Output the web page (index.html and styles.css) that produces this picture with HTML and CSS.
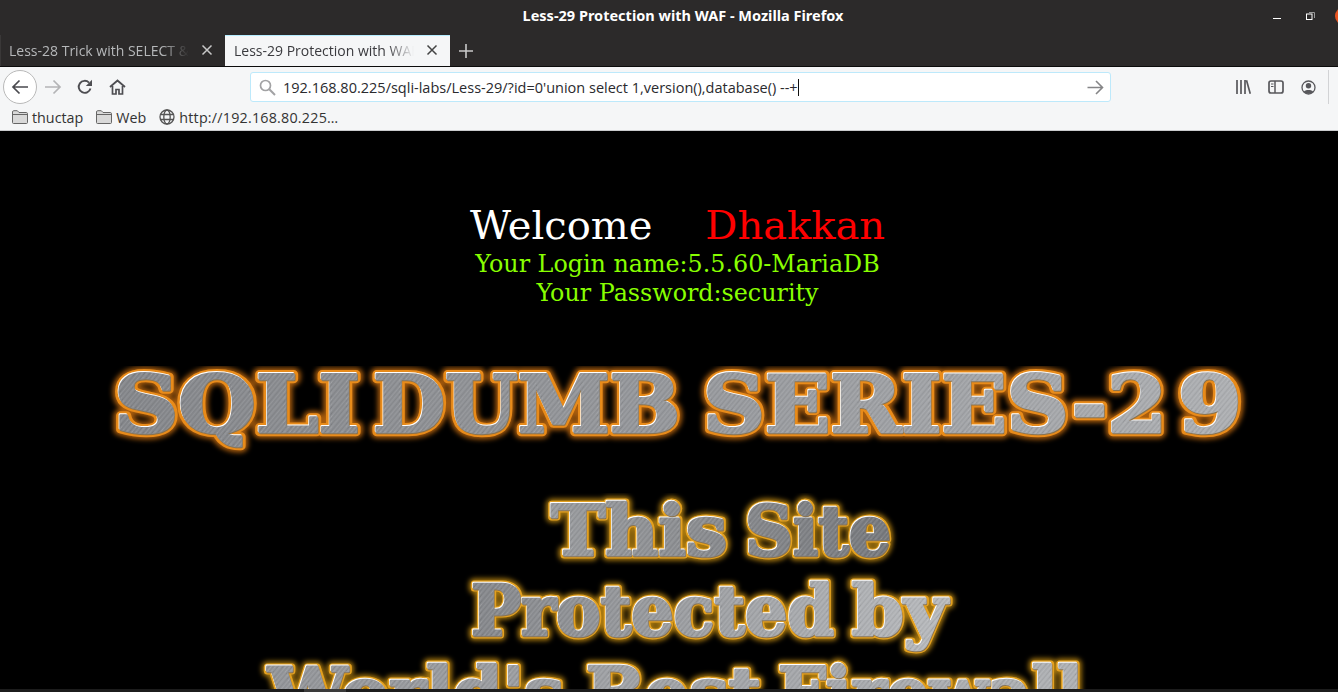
FILE: index.html
```html
<!DOCTYPE html>
<html lang="en">
<head>
<meta charset="utf-8">
<title>Less-29 Protection with WAF</title>
<link rel="stylesheet" href="styles.css">
</head>
<body>
<svg class="defs" aria-hidden="true">
  <defs>
    <pattern id="hatch" width="11" height="11" patternUnits="userSpaceOnUse" patternTransform="rotate(-50)">
      <rect width="11" height=".7" fill="#ffffff" fill-opacity=".13"/>
      <rect y="1.600" width="11" height=".6" fill="#000000" fill-opacity=".08"/>
      <rect y="3" width="11" height="1.100" fill="#ffffff" fill-opacity=".07"/>
      <rect y="5.100" width="11" height=".6" fill="#000000" fill-opacity=".10"/>
      <rect y="6.700" width="11" height=".8" fill="#ffffff" fill-opacity=".12"/>
      <rect y="9" width="11" height=".8" fill="#000000" fill-opacity=".07"/>
    </pattern>
    <linearGradient id="steel-a" gradientUnits="userSpaceOnUse" x1="110" y1="0" x2="1245" y2="0">
      <stop offset="0" stop-color="#85878b"/><stop offset=".5" stop-color="#96989c"/><stop offset="1" stop-color="#aeb0b3"/>
    </linearGradient>
    <linearGradient id="steel-b" gradientUnits="userSpaceOnUse" x1="548" y1="0" x2="893" y2="0">
      <stop offset="0" stop-color="#9a9c9f"/><stop offset="1" stop-color="#77797d"/>
    </linearGradient>
    <linearGradient id="steel-c" gradientUnits="userSpaceOnUse" x1="468" y1="0" x2="948" y2="0">
      <stop offset="0" stop-color="#85878b"/><stop offset="1" stop-color="#b8babd"/>
    </linearGradient>
    <linearGradient id="steel-d" gradientUnits="userSpaceOnUse" x1="266" y1="0" x2="1085" y2="0">
      <stop offset="0" stop-color="#939599"/><stop offset="1" stop-color="#afb1b4"/>
    </linearGradient>
    <g id="t-series" class="slab slab-a">
      <text x="114" y="66" textLength="246" lengthAdjust="spacingAndGlyphs">SQLI</text>
      <text x="373" y="66" textLength="307" lengthAdjust="spacingAndGlyphs">DUMB</text>
      <text x="703" y="66" textLength="464" lengthAdjust="spacingAndGlyphs">SERIES-2</text>
      <text x="1178" y="66" textLength="64" lengthAdjust="spacingAndGlyphs">9</text>
    </g>
    <g id="t-site" class="slab slab-b">
      <text x="551" y="62" textLength="176" lengthAdjust="spacingAndGlyphs">This</text>
      <text x="745" y="62" textLength="146" lengthAdjust="spacingAndGlyphs">Site</text>
    </g>
    <g id="t-prot" class="slab slab-b">
      <text x="471" y="142" textLength="363" lengthAdjust="spacingAndGlyphs">Protected</text>
      <text x="852" y="142" textLength="95" lengthAdjust="spacingAndGlyphs">by</text>
    </g>
    <g id="t-fire" class="slab slab-b">
      <text x="268" y="224" textLength="296" lengthAdjust="spacingAndGlyphs">World's</text>
      <text x="586" y="224" textLength="175" lengthAdjust="spacingAndGlyphs">Best</text>
      <text x="778" y="224" textLength="305" lengthAdjust="spacingAndGlyphs">Firewall</text>
    </g>
    <g id="t-waf"><use href="#t-site"/><use href="#t-prot"/><use href="#t-fire"/></g>
  </defs>
</svg>
<div class="window">
  <header class="titlebar">
    <div class="title">Less-29 Protection with WAF - Mozilla Firefox</div>
    <div class="winctl">
      <svg class="ico-min" width="10" height="3" viewBox="0 0 10 3"><rect y="1" width="8" height="1" fill="#fff"/></svg>
      <svg class="ico-max" width="10" height="10" viewBox="0 0 10 10"><path d="M3 1.500h5.500V7" fill="none" stroke="#9a9a9a"/><rect x=".5" y="3" width="5.500" height="5.500" fill="none" stroke="#fff"/></svg>
      <span class="ico-close"></span>
    </div>
  </header>
  <nav class="tabstrip">
    <div class="tab">
      <span class="tab-label">Less-28 Trick with SELECT &amp; UNION</span>
      <svg class="tab-x" width="12" height="12" viewBox="0 0 12 12"><path d="M1.500 1.500l9 9M10.500 1.500l-9 9" stroke="#c8c8c8" stroke-width="1.500"/></svg>
    </div>
    <div class="tab tab-active">
      <span class="tab-label">Less-29 Protection with WAF</span>
      <svg class="tab-x" width="12" height="12" viewBox="0 0 12 12"><path d="M1.500 1.500l9 9M10.500 1.500l-9 9" stroke="#444" stroke-width="1.500"/></svg>
    </div>
    <svg class="newtab" width="14" height="14" viewBox="0 0 14 14"><path d="M7 0v14M0 7h14" stroke="#c9c9c9" stroke-width="1.600"/></svg>
  </nav>
  <div class="toolbar">
    <div class="navbtns">
      <span class="backbtn">
        <svg width="18" height="16" viewBox="0 0 18 16"><path d="M17 8H2M8.500 1.500L2 8l6.500 6.500" fill="none" stroke="#4a4a4f" stroke-width="1.700"/></svg>
      </span>
      <svg class="fwd" width="18" height="16" viewBox="0 0 18 16"><path d="M1 8h15M9.500 1.500L16 8l-6.500 6.500" fill="none" stroke="#b4b4b6" stroke-width="1.700"/></svg>
      <svg class="reload" width="16" height="16" viewBox="0 0 16 16"><path d="M13.500 9.500A6 6 0 1 1 12 3.600" fill="none" stroke="#4e4e52" stroke-width="1.900"/><path d="M15 .8v6.200H8.800z" fill="#4e4e52"/></svg>
      <svg class="home" width="17" height="16" viewBox="0 0 17 16"><path d="M1 8l7.500-6.500L16 8" fill="none" stroke="#4e4e52" stroke-width="1.800"/><path d="M3.500 7v8h3.500v-4.500h3V15h3.500V7" fill="none" stroke="#4e4e52" stroke-width="1.700"/></svg>
    </div>
    <div class="urlbar">
      <svg class="search" width="17" height="17" viewBox="0 0 17 17"><circle cx="6.500" cy="6.500" r="5" fill="none" stroke="#a2a2a4" stroke-width="1.700"/><path d="M10.300 10.300l5.700 5.700" stroke="#a2a2a4" stroke-width="2"/></svg>
      <span class="url">192.168.80.225/sqli-labs/Less-29/?id=0'union select 1,version(),database() --+</span><span class="caret"></span>
      <svg class="go" width="17" height="15" viewBox="0 0 17 15"><path d="M.5 7.500h15M9 1l6.500 6.500L9 14" fill="none" stroke="#858587" stroke-width="1.600"/></svg>
    </div>
    <div class="tools">
      <svg width="15" height="14" viewBox="0 0 15 14"><path d="M1 0v14M5 0v14M9 0v14M10.500 .3l3.800 13.500" fill="none" stroke="#58585c" stroke-width="1.700"/></svg>
      <svg width="16" height="14" viewBox="0 0 16 14"><rect x="1" y="1" width="14" height="12" rx="2" fill="none" stroke="#58585c" stroke-width="1.700"/><path d="M7 1v12" stroke="#58585c" stroke-width="1.500"/><path d="M3 4h2.500M3 6.500h2.500" stroke="#58585c" stroke-width="1.200"/></svg>
      <svg width="15" height="15" viewBox="0 0 15 15"><circle cx="7.500" cy="7.500" r="6.500" fill="none" stroke="#58585c" stroke-width="1.300"/><circle cx="7.500" cy="5.800" r="2.700" fill="#58585c"/><path d="M2.800 12c1-2.600 8.400-2.600 9.400 0-2.500 2.300-7 2.300-9.400 0z" fill="#58585c"/></svg>
      <span class="tool-sep"></span>
    </div>
  </div>
  <div class="bookmarks">
    <a class="bm">
      <svg width="16" height="14" viewBox="0 0 16 14"><path d="M.5 12.500V2c0-.8.500-1.300 1.200-1.300h3.600L7 2.500h7.300c.7 0 1.200.5 1.200 1.200v8.800c0 .6-.4 1-1 1H1.500c-.6 0-1-.4-1-1z" fill="#d9d9d9" stroke="#666"/><path d="M.8 4.500h14.500" stroke="#666"/></svg>
      thuctap</a>
    <a class="bm">
      <svg width="16" height="14" viewBox="0 0 16 14"><path d="M.5 12.500V2c0-.8.500-1.300 1.200-1.300h3.600L7 2.500h7.300c.7 0 1.200.5 1.200 1.200v8.800c0 .6-.4 1-1 1H1.500c-.6 0-1-.4-1-1z" fill="#d9d9d9" stroke="#666"/><path d="M.8 4.500h14.500" stroke="#666"/></svg>
      Web</a>
    <a class="bm bm-url">
      <svg width="16" height="16" viewBox="0 0 16 16"><g fill="none" stroke="#555" stroke-width="1.300"><circle cx="8" cy="8" r="7"/><ellipse cx="8" cy="8" rx="3.200" ry="7"/><path d="M1.500 5.500h13M1.500 10.500h13"/></g></svg>
      http://192.168.80.225…</a>
  </div>
  <main class="page">
    <div class="welcome">
      <div class="hello"><span class="hello-w">Welcome</span><span class="hello-gap"></span><span class="hello-d">Dhakkan</span></div>
      <div class="creds">Your Login name:5.5.60-MariaDB</div>
      <div class="creds">Your Password:security</div>
    </div>
    <svg class="banner banner-series" viewBox="0 0 1338 110" role="img" aria-label="SQLI DUMB SERIES-29">
      <use href="#t-series" class="l-glow"/>
      <use href="#t-series" class="l-rim"/>
      <use href="#t-series" class="l-hi"/>
      <use href="#t-series" class="l-lo"/>
      <use href="#t-series" class="l-face" fill="url(#steel-a)" stroke="url(#steel-a)"/>
      <use href="#t-series" class="l-face" fill="url(#hatch)" stroke="url(#hatch)"/>
    </svg>
    <svg class="banner banner-waf" viewBox="0 0 1338 240" role="img" aria-label="This Site Protected by World's Best Firewall">
      <use href="#t-waf" class="l-glow l-gold"/>
      <use href="#t-waf" class="l-rim l-gold"/>
      <use href="#t-waf" class="l-hi"/>
      <use href="#t-waf" class="l-lo"/>
      <use href="#t-site" class="l-face" fill="url(#steel-b)" stroke="url(#steel-b)"/>
      <use href="#t-prot" class="l-face" fill="url(#steel-c)" stroke="url(#steel-c)"/>
      <use href="#t-fire" class="l-face" fill="url(#steel-d)" stroke="url(#steel-d)"/>
      <use href="#t-waf" class="l-face" fill="url(#hatch)" stroke="url(#hatch)"/>
    </svg>
  </main>
  <footer class="bottom"><span class="bottom-mark"></span></footer>
</div>
</body>
</html>
```

FILE: styles.css
```css
* { box-sizing: border-box; }
html, body { margin: 0; height: 100%; background: #000; overflow: hidden; }
.defs { position: absolute; width: 0; height: 0; }
.window { display: flex; flex-direction: column; height: 692px; font-family: "Open Sans", "Noto Sans", sans-serif; }

.titlebar { display: flex; align-items: center; height: 35px; background: #2c2a2a; flex: none; }
.title { flex: 1; padding-left: 95px; margin-bottom: 6px; text-align: center; color: #fff; font-size: 14.500px; font-weight: 700; font-family: "Noto Sans", sans-serif; }
.winctl { display: flex; align-items: center; width: 67px; flex: none; }
.winctl svg { flex: none; }
.ico-min { margin-top: 2px; margin-left: 2px; }
.ico-max { margin-left: 23px; margin-bottom: 3px; }
.ico-close { margin-left: 19px; margin-bottom: 3px; width: 18px; height: 18px; border-radius: 50%; background: #e95420; flex: none; }

.tabstrip { display: flex; align-items: center; height: 32px; background: #2c2a2a; border-bottom: 1px solid #0c0c0c; flex: none; }
.tab { display: flex; align-items: center; width: 225px; height: 31px; padding: 0 12px 1px 8px; color: #b6b8ba; font-size: 14px; border-left: 1px solid #3a3838; }
.tab-label { flex: 1; white-space: nowrap; overflow: hidden; -webkit-mask-image: linear-gradient(to right, #000 85%, transparent); mask-image: linear-gradient(to right, #000 85%, transparent); }
.tab-x { flex: none; margin-left: 12px; }
.tab-active { background: #f5f6f7; color: #3a3a3e; border-top: 1px solid #b5ecff; border-left: 0; padding-left: 9px; padding-bottom: 2px; }
.newtab { margin-left: 9px; flex: none; }

.toolbar { display: flex; align-items: center; height: 38px; padding-top: 2px; background: #f5f6f7; flex: none; }
.navbtns { display: flex; align-items: center; width: 250px; padding-left: 3px; flex: none; }
.backbtn { display: flex; align-items: center; justify-content: center; width: 34px; height: 34px; border-radius: 50%; background: #fff; border: 1px solid #b9b9b9; }
.fwd { margin-left: 7px; }
.reload { margin-left: 15px; }
.home { margin-left: 16px; }
.urlbar { display: flex; align-items: center; width: 861px; height: 30px; background: #fff; border: 1px solid #bde9fb; border-radius: 3px; padding: 0 6px 0 8px; flex: none; }
.search { flex: none; }
.url { margin-left: 7px; font-size: 14.500px; color: #2a2a2e; white-space: nowrap; }
.caret { width: 1px; height: 17px; background: #111; }
.go { margin-left: auto; }
.tools { display: flex; align-items: center; flex: 1; padding-left: 125px; gap: 17px; }
.tool-sep { width: 1px; height: 34px; background: #d2d3d5; margin-left: -5px; flex: none; }

.bookmarks { display: flex; align-items: center; gap: 13px; height: 26px; padding: 0 0 1px 12px; background: #f5f6f7; border-bottom: 1px solid #c9cacc; font-size: 14.300px; color: #333; flex: none; }
.bm { display: flex; align-items: center; gap: 4px; }
.bm-url { letter-spacing: .22px; }

.page { flex: 1; min-height: 0; overflow: hidden; background: #000; }
.welcome { padding: 69px 0 0 17px; text-align: center; font-family: "DejaVu Serif", serif; }
.hello { font-size: 40px; line-height: 50px; height: 50px; color: #fff; }
.hello-gap { display: inline-block; width: 53px; }
.hello-d { color: #f00; }
.creds { font-size: 23.800px; line-height: 29px; color: #88ff00; }
.banner { display: block; width: 1338px; }
.banner-series { height: 110px; margin-top: 58px; }
.banner-waf { height: 240px; margin-top: 17px; }

.slab { font-family: "DejaVu Serif", serif; font-weight: 700; }
.slab-a { font-size: 79px; }
.slab-b { font-size: 70px; }
.l-face { stroke-width: 2.600; stroke-linejoin: round; }
.l-glow { fill: #a85c0d; stroke: #a85c0d; stroke-width: 13; stroke-linejoin: round; filter: blur(2.500px); }
.l-rim { fill: #e88b1a; stroke: #e88b1a; stroke-width: 8.500; stroke-linejoin: round; }
.l-gold.l-glow { fill: #a8780f; stroke: #a8780f; stroke-width: 11; }
.l-gold.l-rim { fill: #e3a01f; stroke: #e3a01f; stroke-width: 7; }
.l-hi { fill: #fff; stroke: #fff; stroke-width: 2.600; stroke-linejoin: round; transform: translate(-.7px, -.7px); }
.l-lo { fill: #8a7350; stroke: #8a7350; stroke-width: 2.600; stroke-linejoin: round; transform: translate(.6px, .6px); }

.bottom { height: 3px; background: #1c1c1c; flex: none; }
.bottom-mark { display: block; width: 42px; height: 3px; margin-left: 304px; background: #3a3a3a; }
```
